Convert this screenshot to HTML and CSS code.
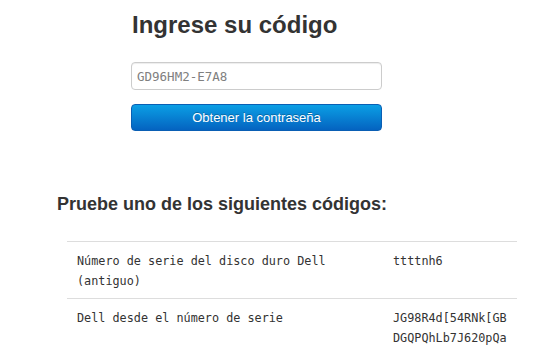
FILE: index.html
```html
<!DOCTYPE html>
<html lang="es">
<head>
    <meta charset="UTF-8">
    <meta name="viewport" content="width=device-width, initial-scale=1.0">
    <title>Ingrese su código</title>
    <link rel="stylesheet" href="styles.css">
</head>
<body>
    <div class="code-form">
        <h1>Ingrese su código</h1>
        <input type="text" class="code-input" value="GD96HM2-E7A8">
        <button class="btn-primary">Obtener la contraseña</button>
    </div>

    <h2 class="results-title">Pruebe uno de los siguientes códigos:</h2>
    <table class="results">
        <colgroup>
            <col class="col-name">
            <col class="col-code">
        </colgroup>
        <tr>
            <td>Número de serie del disco duro Dell (antiguo)</td>
            <td class="code">ttttnh6</td>
        </tr>
        <tr>
            <td>Dell desde el número de serie</td>
            <td class="code">JG98R4d[54RNk[GBDGQPQhLb7J620pQa</td>
        </tr>
    </table>
</body>
</html>
```

FILE: styles.css
```css
body {
    margin: 0;
    font-family: "Liberation Sans", Arial, sans-serif;
    color: #333;
    background-color: #fff;
}
.code-form {
    display: flex;
    flex-direction: column;
    width: 251px;
    margin-left: 131px;
}
h1 {
    margin: 11px 0 23px 1px;
    font-size: 24px;
    line-height: 28px;
    font-weight: bold;
    color: #333;
}
.code-input {
    box-sizing: border-box;
    height: 28px;
    width: 100%;
    margin: 0 0 14px;
    padding: 4px 5px;
    font-family: "DejaVu Sans Mono", monospace;
    font-size: 12.5px;
    color: #808080;
    border: 1px solid #ccc;
    border-radius: 4px;
    box-shadow: inset 0 1px 1px rgba(0, 0, 0, 0.075);
}
.btn-primary {
    box-sizing: border-box;
    height: 27px;
    width: 100%;
    padding: 0;
    font-family: "Liberation Sans", Arial, sans-serif;
    font-size: 13px;
    color: #fff;
    background-image: linear-gradient(to bottom, #0b9fe5, #0463c0);
    border: 1px solid #0a5fb4;
    border-radius: 4px;
    text-shadow: 0 -1px 0 rgba(0, 0, 0, 0.25);
    cursor: pointer;
}
.results-title {
    margin: 62px 0 26px 57px;
    font-size: 18px;
    line-height: 22px;
    font-weight: bold;
}
.results {
    margin-left: 67px;
    width: 450px;
    table-layout: fixed;
    border-collapse: collapse;
    font-family: "DejaVu Sans Mono", monospace;
    font-size: 11.8px;
    line-height: 20px;
    color: #333;
}
.col-name {
    width: 316px;
}
.col-code {
    width: 134px;
}
.results td {
    padding: 9px 10px 7px;
    vertical-align: top;
    border-top: 1px solid #ddd;
}
.results .code {
    word-break: break-all;
}
```
